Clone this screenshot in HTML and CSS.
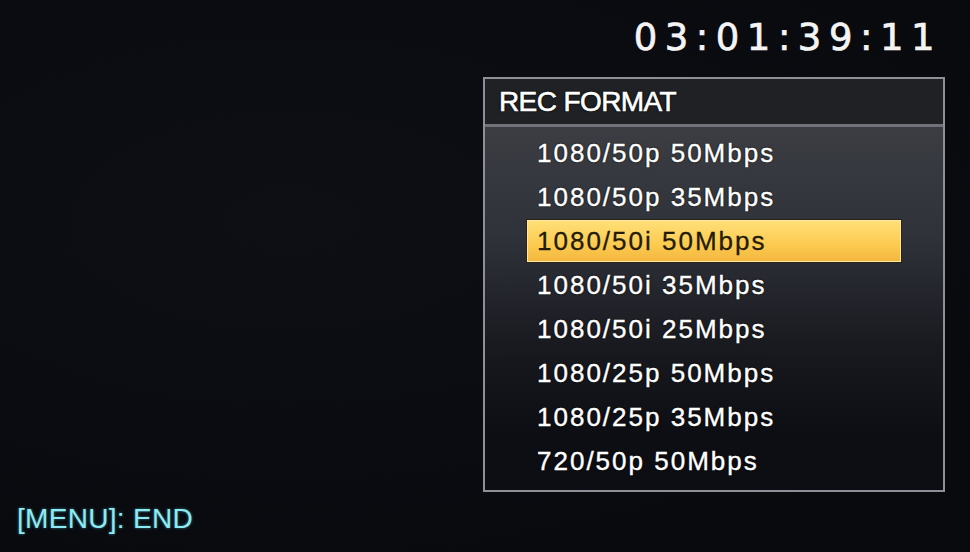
FILE: index.html
```html
<!DOCTYPE html>
<html lang="en">
<head>
    <meta charset="UTF-8">
    <meta name="viewport" content="width=device-width, initial-scale=1.0">
    <title>REC FORMAT</title>
    <link rel="stylesheet" href="styles.css">
</head>
<body>
    <div class="screen">
        <div class="timecode">03:01:39:11</div>

        <div class="menu">
            <div class="menu-title">REC FORMAT</div>
            <ul class="menu-list">
                <li class="item">1080/50p 50Mbps</li>
                <li class="item">1080/50p 35Mbps</li>
                <li class="item selected">1080/50i 50Mbps</li>
                <li class="item">1080/50i 35Mbps</li>
                <li class="item">1080/50i 25Mbps</li>
                <li class="item">1080/25p 50Mbps</li>
                <li class="item">1080/25p 35Mbps</li>
                <li class="item">720/50p 50Mbps</li>
            </ul>
        </div>

        <div class="hint">[MENU]: END</div>
    </div>
</body>
</html>
```

FILE: styles.css
```css
body {
    margin: 0;
    background-color: #0a0b10;
    font-family: "Liberation Sans", Arial, sans-serif;
    color: #fff;
}
.screen {
    width: 970px;
    height: 552px;
    display: flex;
    flex-direction: column;
    box-sizing: border-box;
    background: radial-gradient(ellipse at 30% 40%, #0e0f15 0%, #090a0e 80%);
}
.timecode {
    align-self: flex-end;
    margin: 15px 28px 0 0;
    font-family: "DejaVu Sans", sans-serif;
    font-size: 37px;
    line-height: 46px;
    letter-spacing: 7.5px;
    color: #f4f4f4;
    -webkit-text-stroke: 0.7px #f4f4f4;
}

/* menu panel */
.menu {
    align-self: flex-end;
    margin: 16px 25px 0 0;
    width: 462px;
    box-sizing: border-box;
    border: 2px solid #8d9197;
    background-color: #0d0e13;
}
.menu-title {
    height: 45px;
    line-height: 45px;
    padding-left: 14px;
    background-color: #202125;
    border-bottom: 3px solid #6f7379;
    font-size: 28px;
    letter-spacing: -0.6px;
    -webkit-text-stroke: 0.6px #fff;
    text-shadow: 0 0 2px #000, 0 0 2px #000, 0 0 1px #000;
}
.menu-list {
    list-style: none;
    margin: 0;
    padding: 4px 0 7px 41px;
    background: linear-gradient(#3b3d43 0%, #30323a 30%, #191a20 60%, #0d0e13 85%);
}
.item {
    width: 376px;
    height: 44px;
    line-height: 44px;
    box-sizing: border-box;
    padding-left: 11px;
    font-size: 26px;
    letter-spacing: 2px;
    -webkit-text-stroke: 0.4px #fff;
    text-shadow: 0 0 2px #000, 0 0 1px #000;
}
.item.selected {
    border: 1px solid #2a2418;
    line-height: 42px;
    padding-left: 10px;
    background: linear-gradient(#ffe07a, #fcca4e 60%, #f2b63e);
    color: #231a08;
    -webkit-text-stroke: 0.3px #231a08;
    text-shadow: none;
    box-shadow: inset 0 0 0 1px #ffe9a0;
}

.hint {
    margin: auto 0 16px 17px;
    font-size: 28px;
    line-height: 34px;
    letter-spacing: 0.3px;
    color: #8eeaf2;
    text-shadow: 0 0 3px rgba(80, 200, 220, 0.6);
}
```
